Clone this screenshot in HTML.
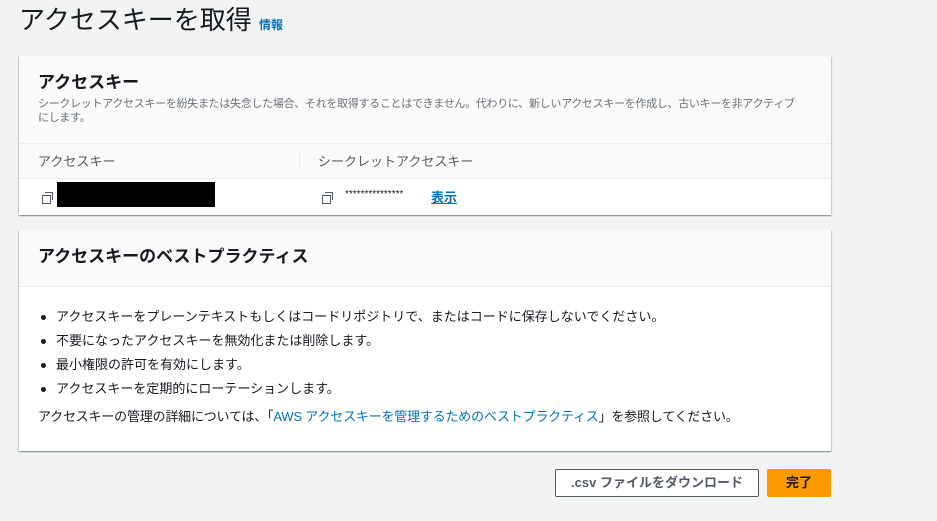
<!DOCTYPE html>
<html><head><meta charset="utf-8"><style>
*{margin:0;padding:0;box-sizing:border-box}
body{width:937px;height:521px;background:#f2f3f3;font-family:"Liberation Sans","Noto Sans CJK JP",sans-serif;color:#16191f;position:relative;overflow:hidden}
.abs{position:absolute}
.card{position:absolute;left:19px;width:812px;background:#fff;box-shadow:0 1px 1px rgba(0,28,36,.3),1px 1px 1px rgba(0,28,36,.15),-1px 1px 1px rgba(0,28,36,.15)}
.hd{background:#fafafa;border-bottom:1px solid #eaeded}
a{color:#0073bb;text-decoration:none}
.cp{position:absolute;width:11px;height:11px}
.cp:before,.cp:after{content:"";position:absolute;border:1.5px solid #545b64;width:7px;height:7px}
.cp:before{left:3px;top:0;border-left:none;border-bottom:none;border-color:#545b64}
.cp:after{left:0;top:3px;background:#fff}
li{list-style:none;position:relative;padding-left:18px;margin-bottom:8px;font-size:13px;line-height:16px}
li:before{content:"";position:absolute;left:3px;top:6px;width:5px;height:5px;border-radius:50%;background:#16191f}
</style></head><body>
<div class="abs" style="left:19px;top:0px;font-size:26px;color:#16191f">アクセスキーを取得 <a style="font-size:12px;font-weight:bold">情報</a></div>

<div class="card" style="top:56px;height:159px">
 <div class="hd" style="height:88px;padding:15px 19px">
  <div style="font-size:17px;font-weight:bold;line-height:24px">アクセスキー</div>
  <div style="font-size:11px;color:#687078;line-height:14px;margin-top:2px;letter-spacing:-0.3px;padding-right:10px">シークレットアクセスキーを紛失または失念した場合、それを取得することはできません。代わりに、新しいアクセスキーを作成し、古いキーを非アクティブにします。</div>
 </div>
 <div class="abs" style="top:88px;left:0;width:812px;height:35px;border-bottom:1px solid #eaeded;background:#fafafa"></div>
 <div class="abs" style="top:95px;left:19px;font-size:13px;color:#545b64">アクセスキー</div>
 <div class="abs" style="top:96px;left:280px;width:1px;height:18px;background:#eaeded"></div>
 <div class="abs" style="top:95px;left:299px;font-size:13px;color:#545b64">シークレットアクセスキー</div>
 <div class="cp" style="left:23px;top:136px"></div>
 <div class="abs" style="left:38px;top:126px;width:158px;height:25px;background:#000"></div>
 <div class="cp" style="left:303px;top:136px"></div>
 <div class="abs" style="left:326px;top:133px;font-size:10px;color:#16191f">***************</div>
 <a class="abs" style="left:412px;top:131px;font-size:13px;font-weight:bold;text-decoration:underline">表示</a>
</div>

<div class="card" style="top:230px;height:221px">
 <div class="hd" style="height:57px;padding:15px 19px">
  <div style="font-size:17px;font-weight:bold;line-height:24px">アクセスキーのベストプラクティス</div>
 </div>
 <ul style="position:absolute;left:19px;top:79px">
  <li>アクセスキーをプレーンテキストもしくはコードリポジトリで、またはコードに保存しないでください。</li>
  <li>不要になったアクセスキーを無効化または削除します。</li>
  <li>最小権限の許可を有効にします。</li>
  <li>アクセスキーを定期的にローテーションします。</li>
 </ul>
 <div class="abs" style="left:19px;top:179px;font-size:13px;line-height:16px;letter-spacing:-0.2px">アクセスキーの管理の詳細については、「<a>AWS アクセスキーを管理するためのベストプラクティス</a>」を参照してください。</div>
</div>

<div class="abs" style="left:555px;top:469px;width:204px;height:28px;border:1px solid #545b64;border-radius:2px;background:#fff;font-size:13px;font-weight:bold;color:#545b64;text-align:center;line-height:26px">.csv ファイルをダウンロード</div>
<div class="abs" style="left:767px;top:469px;width:64px;height:28px;border-radius:2px;background:#ff9900;font-size:13px;font-weight:bold;color:#16191f;text-align:center;line-height:28px">完了</div>
</body></html>
